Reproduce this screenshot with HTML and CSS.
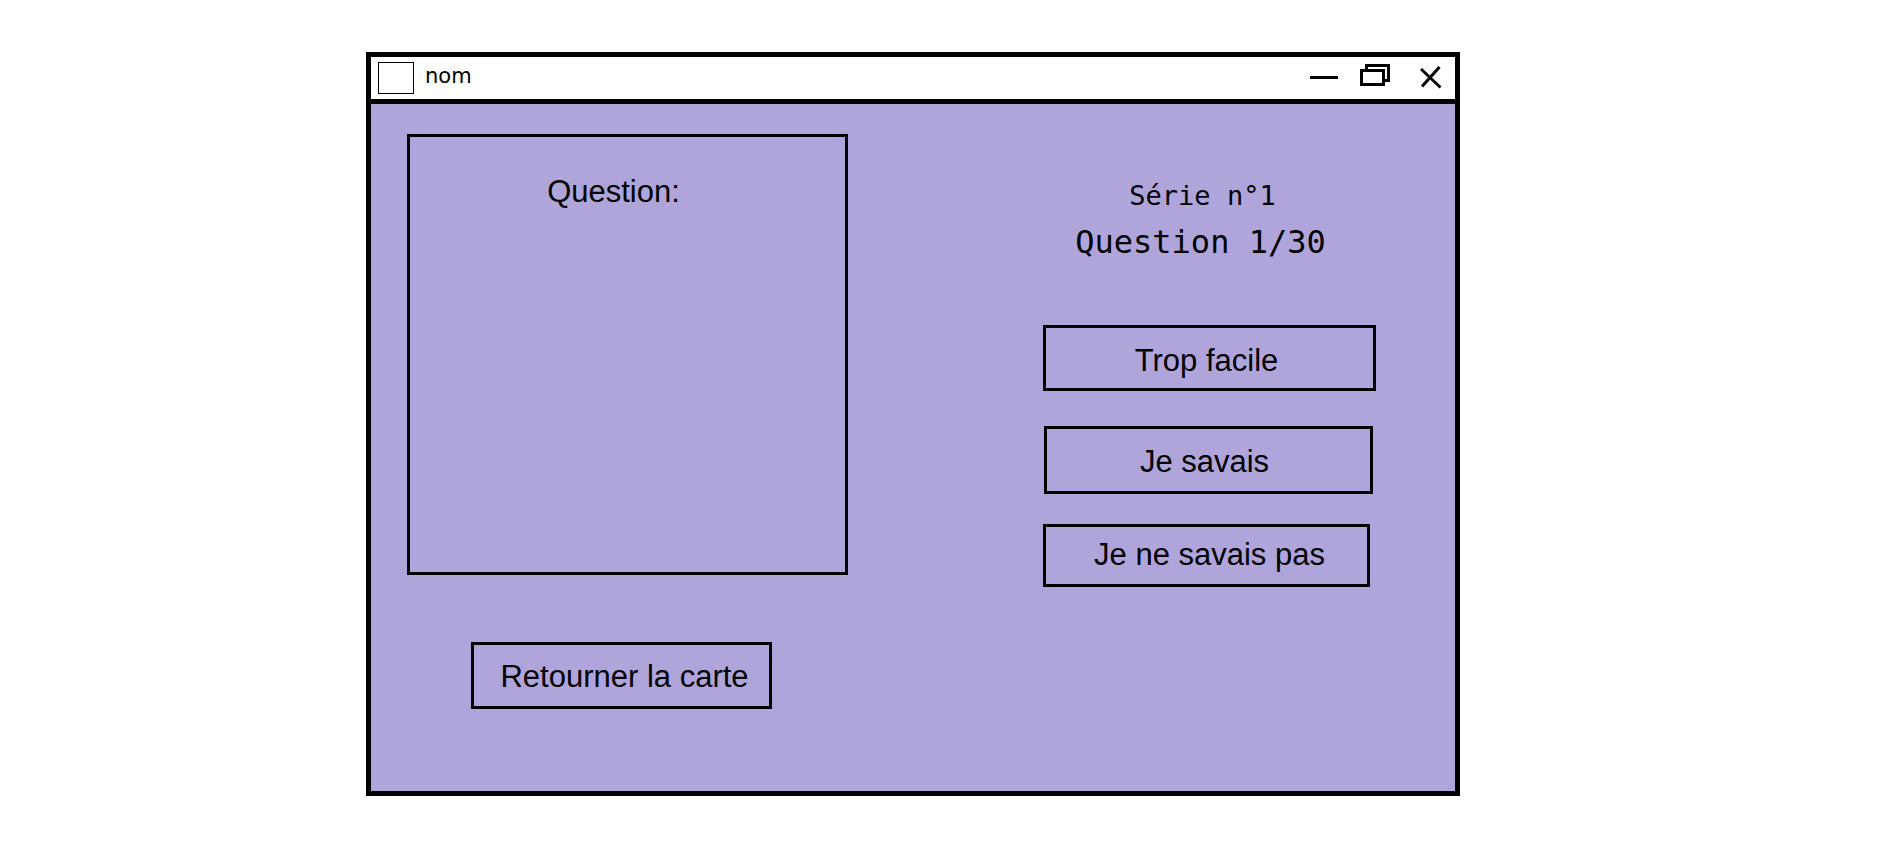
FILE: index.html
```html
<!DOCTYPE html>
<html lang="fr">
<head>
<meta charset="utf-8">
<title>nom</title>
<meta name="viewport" content="width=device-width, initial-scale=1">
<link rel="stylesheet" href="styles.css">
</head>
<body>
<main class="page">
  <section class="window">
    <header class="titlebar">
      <span class="app-icon"></span>
      <h1 class="app-name">nom</h1>
      <div class="controls">
        <button class="control" type="button" aria-label="Réduire">
          <svg width="28" height="26" viewBox="0 0 28 26"><path d="M0 14.5H28"/></svg>
        </button>
        <button class="control" type="button" aria-label="Restaurer">
          <svg width="30" height="26" viewBox="0 0 30 26"><path d="M6.500 8V2.500H28.500V17.500H25M1.500 7.500H23.500V21.500H1.500Z"/></svg>
        </button>
        <button class="control" type="button" aria-label="Fermer">
          <svg width="22" height="26" viewBox="0 0 22 26"><path d="M1 6L20.500 24.500M19.500 4L2 23.500"/></svg>
        </button>
      </div>
    </header>
    <div class="content">
      <div class="left">
        <article class="card"><h2 class="card-title">Question:</h2></article>
        <button class="btn btn-flip" type="button">Retourner la carte</button>
      </div>
      <div class="right">
        <p class="series">Série n°1</p>
        <p class="progress">Question 1/30</p>
        <div class="answers">
          <button class="btn btn-easy" type="button">Trop facile</button>
          <button class="btn btn-known" type="button">Je savais</button>
          <button class="btn btn-unknown" type="button">Je ne savais pas</button>
        </div>
      </div>
    </div>
  </section>
</main>
</body>
</html>
```
FILE: styles.css
```css
* {
  box-sizing: border-box;
}

body {
  margin: 0;
  background: #fff;
  color: #000;
  font-family: "Liberation Sans", Arial, sans-serif;
}

h1, h2, p {
  margin: 0;
  font-weight: 400;
}

.page {
  display: grid;
  grid-template-columns: 366fr 1094fr 426fr;
  padding: 52px 0;
}

.window {
  grid-column: 2;
  border: 5px solid #000;
  background: #afa5db;
}

.titlebar {
  display: flex;
  align-items: center;
  padding: 5px 13px 5px 7px;
  border-bottom: 5px solid #000;
  background: #fff;
}

.app-icon {
  width: 36px;
  height: 32px;
  border: 1px solid #000;
}

.app-name {
  margin-left: 11px;
  font-family: "DejaVu Sans", Verdana, sans-serif;
  font-size: 21px;
  line-height: 28px;
  padding-bottom: 4px;
}

.controls {
  display: flex;
  margin-left: auto;
  padding-bottom: 4px;
}

.control {
  display: block;
  padding: 0;
  border: 0;
  background: none;
}

.control + .control {
  margin-left: 22px;
}

.control:last-child {
  margin-left: 30px;
}

.control svg {
  display: block;
  fill: none;
  stroke: #000;
  stroke-width: 3;
}

.content {
  display: grid;
  grid-template-columns: 441fr 333fr;
  column-gap: 195px;
  padding: 30px 79px 82px 36px;
}

.card {
  aspect-ratio: 1;
  margin-bottom: 67px;
  padding: 37px 28px 0 0;
  border: 3px solid #000;
  text-align: center;
}

.card-title {
  font-size: 31px;
  line-height: 36px;
}

.btn {
  display: block;
  padding: 15px 0 11px;
  border: 3px solid #000;
  border-radius: 0;
  background: none;
  color: inherit;
  font-family: inherit;
  font-size: 31px;
  line-height: 36px;
  text-align: center;
}

.btn-flip {
  width: 301px;
  margin-left: 64px;
  padding: 14px 0 11px 6px;
}

.right {
  padding-top: 44px;
}

.series,
.progress {
  padding-right: 16px;
  font-family: "DejaVu Sans Mono", Consolas, monospace;
  text-align: center;
}

.series {
  margin-bottom: 6px;
  padding-right: 14px;
  font-size: 27px;
  line-height: 36px;
}

.progress {
  margin-bottom: 61px;
  padding-right: 18px;
  font-size: 32px;
  line-height: 44px;
}

.btn-easy {
  width: 100%;
  padding: 15px 6px 9px 0;
}

.btn-known {
  width: 329px;
  margin: 35px 0 30px 1px;
  padding-right: 8px;
}

.btn-unknown {
  width: 327px;
  padding: 10px 0 11px 6px;
}
```
